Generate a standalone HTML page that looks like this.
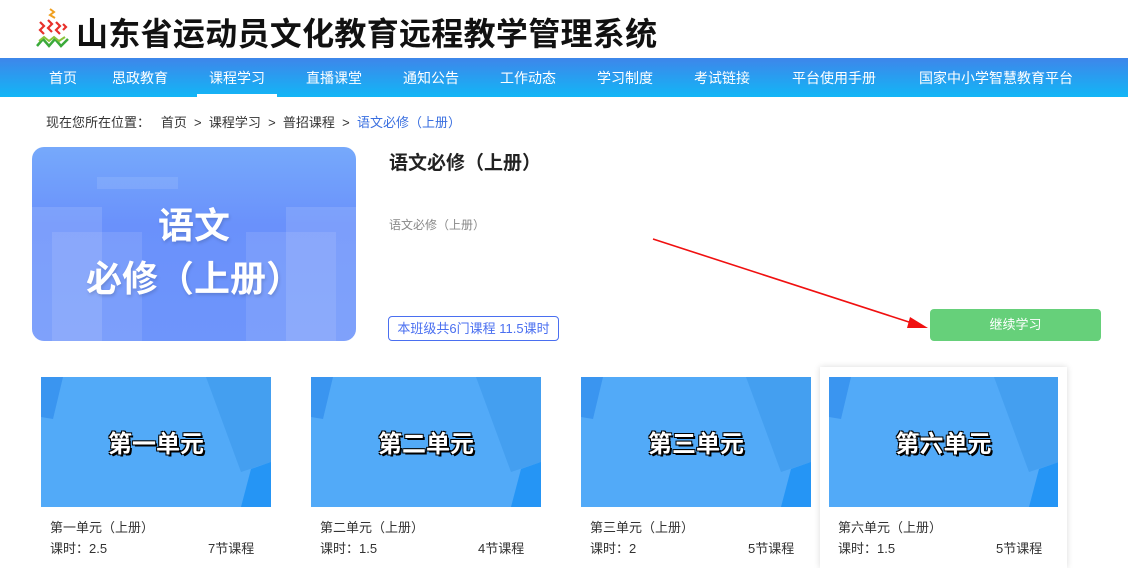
<!DOCTYPE html><html><head><meta charset="utf-8"><style>
*{margin:0;padding:0;box-sizing:border-box}
body{width:1128px;height:568px;overflow:hidden;background:#fff;font-family:"Liberation Sans","Noto Sans CJK SC",sans-serif;position:relative;color:#333}
.abs{position:absolute}
.title{left:76px;top:9px;font-size:32px;font-weight:bold;color:#111;letter-spacing:0.3px;white-space:nowrap}
.nav{left:0;top:58px;width:1128px;height:39px;background:linear-gradient(#3e86ea,#12b6f6)}
.nav span{position:absolute;top:10px;font-size:14px;color:#fff;transform:translateX(-50%);white-space:nowrap}
.crumb{left:46px;top:112px;font-size:13px;color:#333;white-space:nowrap}
.hero{left:32px;top:147px;width:324px;height:194px;border-radius:12px;overflow:hidden;background:linear-gradient(180deg,#76a9fb,#6a91fb 40%,#6e95fb);}
.hero .t{position:absolute;width:100%;text-align:center;color:#fff;font-weight:bold;font-size:36px;text-shadow:1px 2px 3px rgba(0,0,0,.15)}
.card{width:230px;height:130px;background:#52aaf8;overflow:hidden;top:377px}
.card .t{position:absolute;left:0;width:100%;top:47px;text-align:center;font-size:24px;font-weight:bold;color:#fff;text-shadow:2px 2px 0 #000,-1px -1px 0 #000,1px -1px 0 #000,-1px 1px 0 #000}
.cap{font-size:13px;color:#333;white-space:nowrap}
</style></head><body>
<svg class="abs" style="left:36px;top:8px" width="34" height="40" viewBox="0 0 34 40">
<path d="M14 1l4 3-4 3 5 3" stroke="#f0a020" stroke-width="2" fill="none"/>
<path d="M4 14l4 4-4 4 4 4M12 12l4 4-4 4 4 4M20 14l4 4-4 4 4 4M27 16l3 3-3 3" stroke="#e8302a" stroke-width="2.2" fill="none"/>
<path d="M1 38l6-7 6 7 6-7 6 7 7-7" stroke="#3aaa3a" stroke-width="2.5" fill="none"/>
<path d="M3 33l5-4 5 4 5-4 5 4 6-4" stroke="#8ac43a" stroke-width="2" fill="none"/>
</svg>
<div class="abs title">山东省运动员文化教育远程教学管理系统</div>
<div class="abs nav">
<span style="left:63px">首页</span><span style="left:140px">思政教育</span><span style="left:237px">课程学习</span><span style="left:334px">直播课堂</span><span style="left:431px">通知公告</span><span style="left:528px">工作动态</span><span style="left:625px">学习制度</span><span style="left:722px">考试链接</span><span style="left:834px">平台使用手册</span><span style="left:996px">国家中小学智慧教育平台</span>
<div style="position:absolute;left:197px;top:36px;width:80px;height:3px;background:#fff"></div>
</div>
<div class="abs crumb">现在您所在位置：&nbsp;&nbsp; 首页 &nbsp;&gt;&nbsp; 课程学习 &nbsp;&gt;&nbsp; 普招课程 &nbsp;&gt;&nbsp; <span style="color:#3a6fe0">语文必修（上册）</span></div>
<div class="abs hero">
<div style="position:absolute;left:0;top:30px;width:100%;height:12px;background:linear-gradient(90deg,transparent 20%,rgba(255,255,255,.1) 20%,rgba(255,255,255,.1) 45%,transparent 45%)"></div>
<div style="position:absolute;left:0;top:60px;width:70px;height:134px;background:rgba(255,255,255,.12)"></div>
<div style="position:absolute;left:20px;top:85px;width:90px;height:109px;background:rgba(255,255,255,.1)"></div>
<div style="position:absolute;right:0;top:60px;width:70px;height:134px;background:rgba(255,255,255,.12)"></div>
<div style="position:absolute;right:20px;top:85px;width:90px;height:109px;background:rgba(255,255,255,.1)"></div>
<div class="t" style="top:50px">语文</div>
<div class="t" style="top:103px">必修（上册）</div>
</div>
<div class="abs" style="left:389px;top:148px;font-size:19px;font-weight:bold;color:#222">语文必修（上册）</div>
<div class="abs" style="left:389px;top:216px;font-size:12px;color:#888">语文必修（上册）</div>
<div class="abs" style="left:388px;top:316px;width:171px;height:25px;border:1px solid #4a6ff0;border-radius:4px;color:#4a6ff0;font-size:13px;text-align:center;line-height:23px">本班级共6门课程 11.5课时</div>
<div class="abs" style="left:930px;top:309px;width:171px;height:32px;background:#66d07a;border-radius:4px;color:#fff;font-size:13px;text-align:center;line-height:32px">继续学习</div>
<svg class="abs" style="left:0;top:0" width="1128" height="568"><line x1="653" y1="239" x2="915" y2="324" stroke="#f01010" stroke-width="1.6"/><path d="M928 328l-18-11-3 11z" fill="#f01010"/></svg>
<div class="abs" style="left:820px;top:367px;width:247px;height:201px;box-shadow:0 0 6px rgba(0,0,0,.15);background:#fff"></div>
<div class="abs card" style="left:41px"><svg class="abs" width="230" height="130"><polygon points="0,0 22,0 12,42 0,40" fill="#3a95f0"/><polygon points="165,0 230,0 230,85 200,95" fill="#449ff0"/><polygon points="200,130 210,92 230,85 230,130" fill="#2595f5"/></svg><div class="t">第一单元</div></div>
<div class="abs card" style="left:311px"><svg class="abs" width="230" height="130"><polygon points="0,0 22,0 12,42 0,40" fill="#3a95f0"/><polygon points="165,0 230,0 230,85 200,95" fill="#449ff0"/><polygon points="200,130 210,92 230,85 230,130" fill="#2595f5"/></svg><div class="t">第二单元</div></div>
<div class="abs card" style="left:581px"><svg class="abs" width="230" height="130"><polygon points="0,0 22,0 12,42 0,40" fill="#3a95f0"/><polygon points="165,0 230,0 230,85 200,95" fill="#449ff0"/><polygon points="200,130 210,92 230,85 230,130" fill="#2595f5"/></svg><div class="t">第三单元</div></div>
<div class="abs card" style="left:829px;width:229px"><svg class="abs" width="230" height="130"><polygon points="0,0 22,0 12,42 0,40" fill="#3a95f0"/><polygon points="165,0 230,0 230,85 200,95" fill="#449ff0"/><polygon points="200,130 210,92 230,85 230,130" fill="#2595f5"/></svg><div class="t">第六单元</div></div>
<div class="abs cap" style="left:50px;top:517px">第一单元（上册）</div><div class="abs cap" style="left:50px;top:538px">课时：2.5</div><div class="abs cap" style="left:208px;top:538px">7节课程</div>
<div class="abs cap" style="left:320px;top:517px">第二单元（上册）</div><div class="abs cap" style="left:320px;top:538px">课时：1.5</div><div class="abs cap" style="left:478px;top:538px">4节课程</div>
<div class="abs cap" style="left:590px;top:517px">第三单元（上册）</div><div class="abs cap" style="left:590px;top:538px">课时：2</div><div class="abs cap" style="left:748px;top:538px">5节课程</div>
<div class="abs cap" style="left:838px;top:517px">第六单元（上册）</div><div class="abs cap" style="left:838px;top:538px">课时：1.5</div><div class="abs cap" style="left:996px;top:538px">5节课程</div>
</body></html>
